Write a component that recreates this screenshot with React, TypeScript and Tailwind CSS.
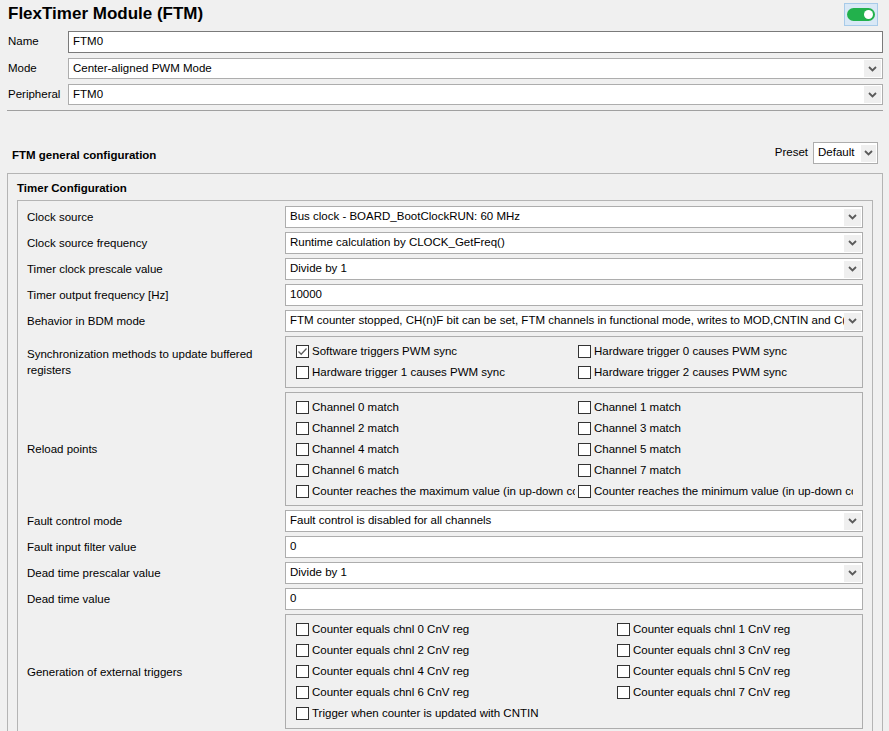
import React from 'react';

const FONT = { fontFamily: '"Liberation Sans", Arial, sans-serif' };

function Chevron() {
  return (
    <svg width="9" height="6" viewBox="0 0 9 6">
      <path d="M1 1 L4.5 4.5 L8 1" fill="none" stroke="#5a5a5a" strokeWidth="1.8" />
    </svg>
  );
}

function Select({ value, tall = true }: { value: string; tall?: boolean }) {
  return (
    <div className={`flex items-center min-w-0 ${tall ? 'h-[22px]' : 'h-[21px]'} border border-[#adadad] bg-white pl-[4px] pr-[1px]`}>
      <span className="flex-1 min-w-0 overflow-hidden whitespace-nowrap">{value}</span>
      <span className="w-[17px] h-[17px] bg-[#efefef] flex items-center justify-center shrink-0">
        <Chevron />
      </span>
    </div>
  );
}

function TextInput({ value, dark = false }: { value: string; dark?: boolean }) {
  return (
    <div className={`flex items-center min-w-0 h-[22px] border ${dark ? 'border-[#7a7a7a] h-[21px]' : 'border-[#adadad]'} bg-white pl-[4px]`}>
      {value}
    </div>
  );
}

function Check({ label, checked = false }: { label: string; checked?: boolean }) {
  return (
    <div className="min-w-0 pr-[3px]">
      <div className="flex items-center h-[21px] overflow-hidden whitespace-nowrap">
        <span className="w-[13px] h-[13px] border border-[#333333] bg-white shrink-0 flex items-center justify-center">
          {checked && (
            <svg width="11" height="11" viewBox="0 0 11 11">
              <path d="M1.5 5.5 L4.2 8.2 L9.5 2.5" fill="none" stroke="#606060" strokeWidth="1.3" />
            </svg>
          )}
        </span>
        <span className="ml-[3px]">{label}</span>
      </div>
    </div>
  );
}

function Group({ cols, pad, items }: { cols: string; pad: string; items: { label: string; checked?: boolean }[] }) {
  return (
    <div className={`grid ${cols} min-w-0 border border-[#adadad] pl-[10px] pr-[6px] ${pad}`}>
      {items.map((it, i) => (
        <Check key={i} label={it.label} checked={it.checked} />
      ))}
    </div>
  );
}

export default function App() {
  const rows: { label: React.ReactNode; control: React.ReactNode }[] = [
    { label: 'Clock source', control: <Select value="Bus clock - BOARD_BootClockRUN: 60 MHz" /> },
    { label: 'Clock source frequency', control: <Select value="Runtime calculation by CLOCK_GetFreq()" /> },
    { label: 'Timer clock prescale value', control: <Select value="Divide by 1" /> },
    { label: 'Timer output frequency [Hz]', control: <TextInput value="10000" /> },
    {
      label: 'Behavior in BDM mode',
      control: <Select value="FTM counter stopped, CH(n)F bit can be set, FTM channels in functional mode, writes to MOD,CNTIN and C(n)V registers bypass the register buffers" />,
    },
    {
      label: (
        <>
          Synchronization methods to update buffered
          <br />
          registers
        </>
      ),
      control: (
        <Group
          cols="grid-cols-[282px_minmax(0,1fr)]"
          pad="pt-[4px] pb-[4px]"
          items={[
            { label: 'Software triggers PWM sync', checked: true },
            { label: 'Hardware trigger 0 causes PWM sync' },
            { label: 'Hardware trigger 1 causes PWM sync' },
            { label: 'Hardware trigger 2 causes PWM sync' },
          ]}
        />
      ),
    },
    {
      label: 'Reload points',
      control: (
        <Group
          cols="grid-cols-[282px_minmax(0,1fr)]"
          pad="pt-[4px] pb-[3px]"
          items={[
            { label: 'Channel 0 match' },
            { label: 'Channel 1 match' },
            { label: 'Channel 2 match' },
            { label: 'Channel 3 match' },
            { label: 'Channel 4 match' },
            { label: 'Channel 5 match' },
            { label: 'Channel 6 match' },
            { label: 'Channel 7 match' },
            { label: 'Counter reaches the maximum value (in up-down counting mode)' },
            { label: 'Counter reaches the minimum value (in up-down counting mode)' },
          ]}
        />
      ),
    },
    { label: 'Fault control mode', control: <Select value="Fault control is disabled for all channels" /> },
    { label: 'Fault input filter value', control: <TextInput value="0" /> },
    { label: 'Dead time prescalar value', control: <Select value="Divide by 1" /> },
    { label: 'Dead time value', control: <TextInput value="0" /> },
    {
      label: 'Generation of external triggers',
      control: (
        <Group
          cols="grid-cols-[321px_minmax(0,1fr)]"
          pad="pt-[4px] pb-[4px]"
          items={[
            { label: 'Counter equals chnl 0 CnV reg' },
            { label: 'Counter equals chnl 1 CnV reg' },
            { label: 'Counter equals chnl 2 CnV reg' },
            { label: 'Counter equals chnl 3 CnV reg' },
            { label: 'Counter equals chnl 4 CnV reg' },
            { label: 'Counter equals chnl 5 CnV reg' },
            { label: 'Counter equals chnl 6 CnV reg' },
            { label: 'Counter equals chnl 7 CnV reg' },
            { label: 'Trigger when counter is updated with CNTIN' },
          ]}
        />
      ),
    },
  ];

  return (
    <div className="w-[889px] h-[731px] overflow-hidden bg-[#f0f0f0] text-[11.5px] text-black" style={FONT}>
      {/* Header */}
      <div className="flex items-center justify-between h-[28px] pl-[8px] pr-[11px]">
        <h1 className="text-[17px] font-bold">FlexTimer Module (FTM)</h1>
        <div className="w-[34px] h-[23px] bg-[#d9e8f6] border border-[#a8cbe9] flex items-center justify-center">
          <div className="w-[28px] h-[13px] rounded-full bg-[#22b14c] flex items-center justify-end pr-[2px]">
            <div className="w-[9px] h-[9px] rounded-full bg-white" />
          </div>
        </div>
      </div>

      {/* Name / Mode / Peripheral */}
      <div className="grid grid-cols-[60px_minmax(0,1fr)] gap-y-[5px] items-center pl-[8px] pr-[6px] mt-[3px]">
        <span>Name</span>
        <TextInput value="FTM0" dark />
        <span>Mode</span>
        <Select value="Center-aligned PWM Mode" tall={false} />
        <span>Peripheral</span>
        <Select value="FTM0" tall={false} />
      </div>

      <div className="ml-[7px] mr-[6px] mt-[5px] border-t border-[#a0a0a0]" />

      {/* General configuration heading */}
      <div className="flex items-center justify-between h-[22px] mt-[31px] pl-[12px] pr-[11px]">
        <h2 className="font-bold pt-[6px]">FTM general configuration</h2>
        <div className="flex items-center gap-[5px]">
          <span>Preset</span>
          <div className="flex items-center w-[65px] h-[22px] border border-[#adadad] bg-white pl-[4px] pr-[1px]">
            <span className="flex-1">Default</span>
            <span className="w-[15px] h-[17px] bg-[#efefef] flex items-center justify-center">
              <Chevron />
            </span>
          </div>
        </div>
      </div>

      {/* Outer box */}
      <div className="ml-[7px] mr-[6px] mt-[9px] border border-[#b4b4b4] px-[9px] pt-[6px]">
        <h3 className="font-bold h-[16px] leading-[16px]">Timer Configuration</h3>
        <div className="mt-[4px] border border-[#b4b4b4] pl-[9px] pr-[9px] pt-[5px] pb-[6px]">
          <div className="grid grid-cols-[258px_minmax(0,1fr)] gap-y-[4px] items-center">
            {rows.map((r, i) => (
              <React.Fragment key={i}>
                <span className="leading-[16px]">{r.label}</span>
                {r.control}
              </React.Fragment>
            ))}
          </div>
        </div>
      </div>
    </div>
  );
}
